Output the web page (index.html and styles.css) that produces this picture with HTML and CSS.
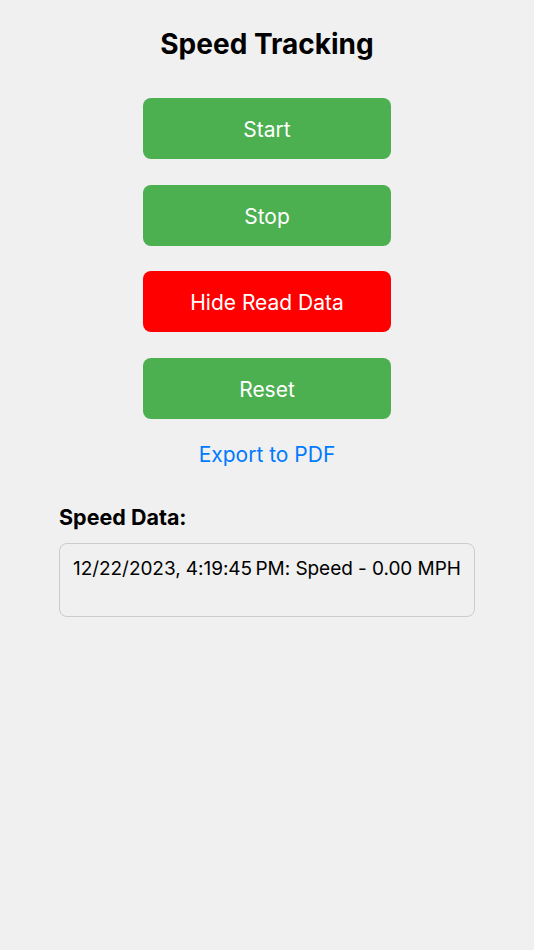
FILE: index.html
```html
<!DOCTYPE html>
<html>
<head>
<meta charset="utf-8">
<link rel="stylesheet" href="styles.css">
</head>
<body>
<main class="screen">
  <h1 class="title">Speed Tracking</h1>
  <div class="buttons">
    <button class="btn btn-green">Start</button>
    <button class="btn btn-green">Stop</button>
    <button class="btn btn-red">Hide Read Data</button>
    <button class="btn btn-green">Reset</button>
  </div>
  <a class="export">Export to PDF</a>
  <section class="data">
    <h2 class="data-title">Speed Data:</h2>
    <div class="data-box">12/22/2023, 4:19:45&#8239;PM: Speed - 0.00 MPH</div>
  </section>
</main>
</body>
</html>
```

FILE: styles.css
```css
html, body {
  margin: 0;
  padding: 0;
  background: #f0f0f0;
  font-family: Inter, "Noto Sans", "Liberation Sans", sans-serif;
  color: #000;
}
.screen {
  width: 534px;
  height: 950px;
  display: flex;
  flex-direction: column;
  align-items: center;
  box-sizing: border-box;
  padding-top: 27px;
}
.title {
  margin: 0;
  font-size: 28px;
  line-height: 34px;
  font-weight: 700;
}
.buttons {
  margin-top: 37px;
  display: flex;
  flex-direction: column;
  gap: 25.67px;
}
.btn {
  width: 248px;
  height: 61px;
  border: none;
  border-radius: 8px;
  color: #fff;
  font-family: inherit;
  font-size: 21px;
  padding: 2px 0 0;
}
.btn-green { background: #4caf50; }
.btn-red { background: #ff0000; }
.export {
  margin-top: 24px;
  color: #007aff;
  font-size: 21px;
  line-height: 24px;
}
.data {
  align-self: stretch;
  padding: 0 59px;
  margin-top: 38px;
}
.data-title {
  margin: 0;
  font-size: 21.5px;
  line-height: 24px;
  font-weight: 700;
}
.data-box {
  margin-top: 14px;
  height: 74px;
  box-sizing: border-box;
  border: 1px solid #cccccc;
  border-radius: 8px;
  padding: 13px 13px;
  font-size: 19px;
  letter-spacing: -0.05px;
  line-height: 24px;
  white-space: nowrap;
}
```
